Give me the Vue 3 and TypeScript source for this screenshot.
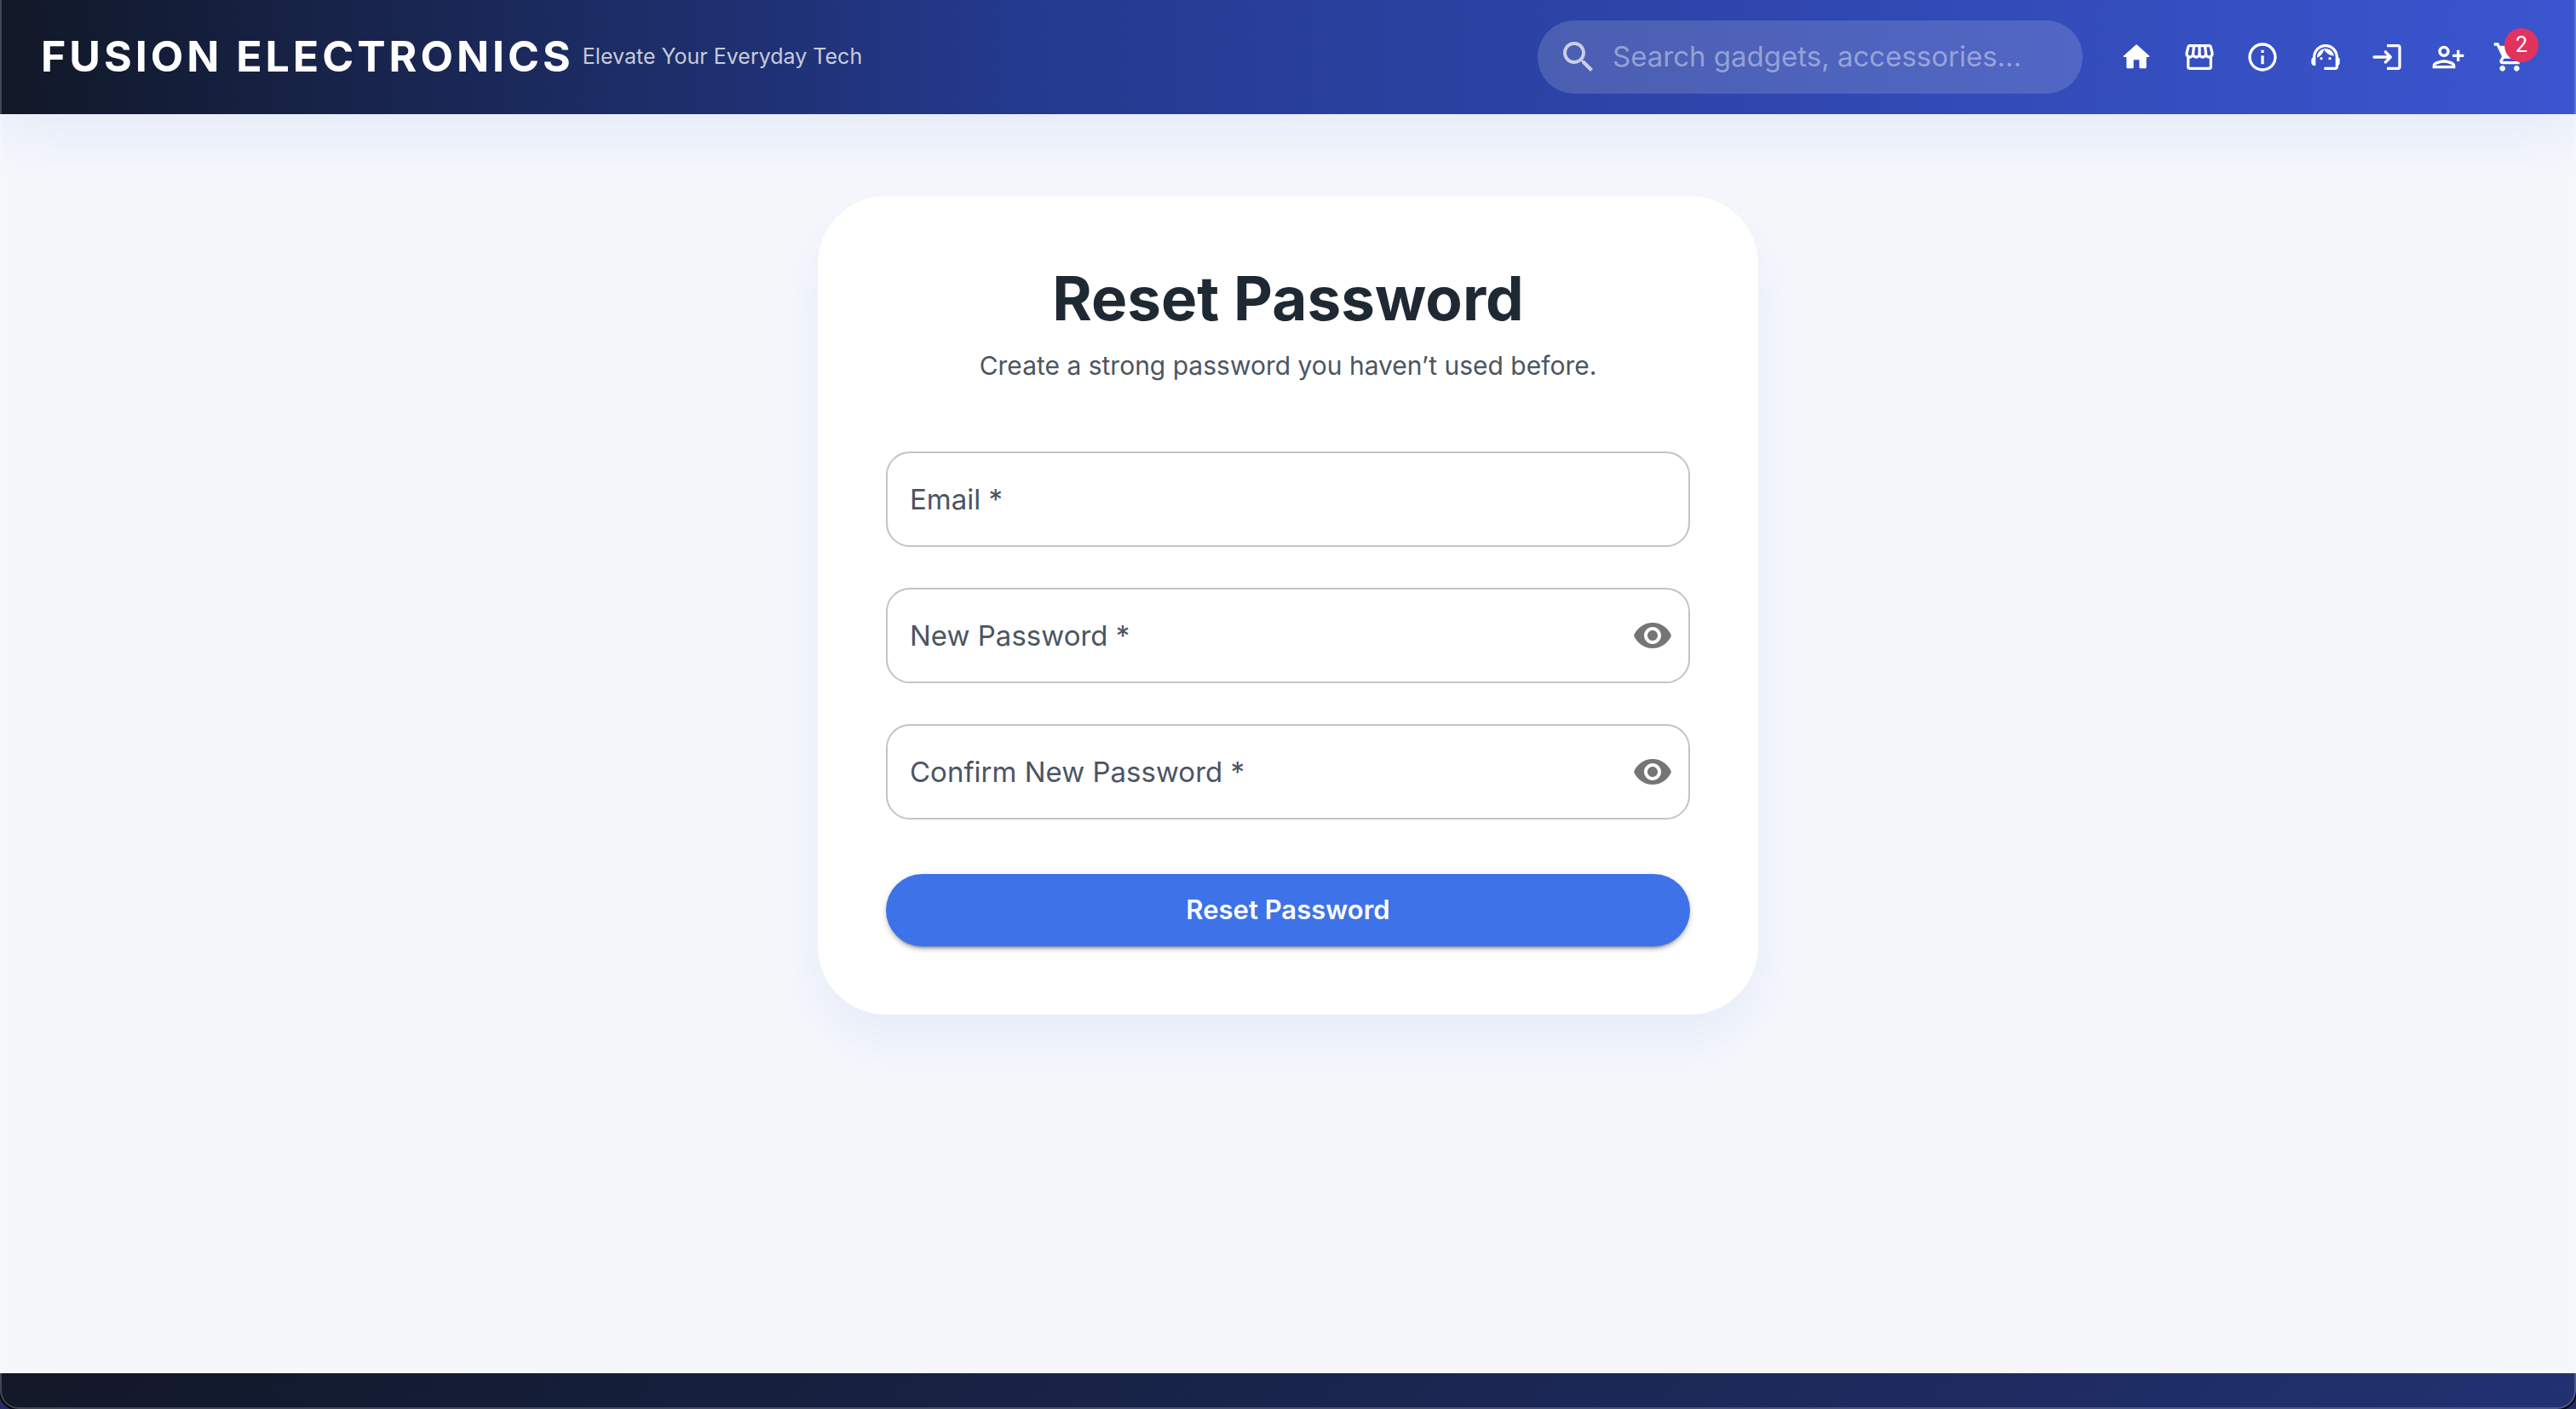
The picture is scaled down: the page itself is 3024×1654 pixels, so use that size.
<script setup lang="ts">
import { reactive, ref } from 'vue'

interface Field {
  id: string
  label: string
  secret: boolean
}

interface NavLink {
  name: string
  wide: boolean
  d: string
}

const fields: Field[] = [
  { id: 'email', label: 'Email', secret: false },
  { id: 'password', label: 'New Password', secret: true },
  { id: 'confirm', label: 'Confirm New Password', secret: true },
]

const values = reactive<Record<string, string>>({ email: '', password: '', confirm: '' })
const shown = reactive<Record<string, boolean>>({ password: false, confirm: false })
const query = ref('')

const links: NavLink[] = [
  { name: 'Home', wide: true, d: 'M10 19v-5h4v5c0 .55.45 1 1 1h3c.55 0 1-.45 1-1v-7h1.7c.46 0 .68-.57.33-.87L12.67 3.6c-.38-.34-.96-.34-1.34 0l-8.36 7.53c-.34.3-.13.87.33.87H5v7c0 .55.45 1 1 1h3c.55 0 1-.45 1-1z' },
  { name: 'Shop', wide: true, d: 'M21.9 8.89l-1.05-4.37c-.22-.9-1-1.52-1.91-1.52H5.05c-.9 0-1.69.63-1.9 1.52L2.1 8.89c-.24 1.02-.02 2.06.62 2.88.08.11.19.19.28.29V19c0 1.1.9 2 2 2h14c1.1 0 2-.9 2-2v-6.94c.09-.09.2-.18.28-.28.64-.82.87-1.87.62-2.89zm-2.99-3.9l1.05 4.37c.1.42.01.84-.25 1.17-.14.18-.44.47-.94.47-.61 0-1.14-.49-1.21-1.14L16.98 5l1.93-.01zM13 5h1.96l.54 4.52c.05.39-.07.78-.33 1.07-.22.26-.54.41-.95.41-.67 0-1.22-.59-1.22-1.31V5zM8.49 9.52L9.04 5H11v4.69c0 .72-.55 1.31-1.29 1.31-.34 0-.65-.15-.89-.41-.25-.29-.37-.68-.33-1.07zm-4.45-.16L5.05 5h1.97l-.58 4.86c-.08.65-.6 1.14-1.21 1.14-.49 0-.8-.29-.93-.47-.27-.32-.36-.75-.26-1.17zM5 19v-6.03c.08.01.15.03.23.03.87 0 1.66-.36 2.24-.95.6.6 1.4.95 2.31.95.87 0 1.65-.36 2.23-.93.59.57 1.39.93 2.29.93.84 0 1.64-.35 2.24-.95.58.59 1.37.95 2.24.95.08 0 .15-.02.23-.03V19H5z' },
  { name: 'About', wide: true, d: 'M11 7h2v2h-2zm0 4h2v6h-2zm1-9C6.48 2 2 6.48 2 12s4.48 10 10 10 10-4.48 10-10S17.52 2 12 2zm0 18c-4.41 0-8-3.59-8-8s3.59-8 8-8 8 3.59 8 8-3.59 8-8 8z' },
  { name: 'Support', wide: false, d: 'M21 12.22C21 6.73 16.74 3 12 3c-4.69 0-9 3.65-9 9.28-.6.34-1 .98-1 1.72v2c0 1.1.9 2 2 2h1v-6.1c0-3.87 3.13-7 7-7s7 3.13 7 7V19h-8v2h8c1.1 0 2-.9 2-2v-1.22c.59-.31 1-.92 1-1.64v-2.3c0-.7-.41-1.31-1-1.62zM9 12a1 1 0 1 0 0 2 1 1 0 0 0 0-2zm6 0a1 1 0 1 0 0 2 1 1 0 0 0 0-2zm3-.97C17.52 8.18 15.04 6 12.05 6c-3.03 0-6.29 2.51-6.03 6.45 2.47-1.01 4.33-3.21 4.86-5.89 1.31 2.63 4 4.44 7.12 4.47z' },
  { name: 'Log in', wide: false, d: 'M10.3 7.7c-.39.39-.39 1.010 0 1.400l1.900 1.900H3c-.55 0-1 .45-1 1s.45 1 1 1h9.200l-1.900 1.900c-.39.39-.39 1.010 0 1.400.39.39 1.010.39 1.400 0l3.590-3.590c.39-.39.39-1.020 0-1.410L11.700 7.700c-.39-.39-1.010-.39-1.400 0zM20 19h-8v2h8c1.100 0 2-.9 2-2V5c0-1.100-.9-2-2-2h-8v2h8v14z' },
  { name: 'Register', wide: false, d: 'M13 8c0-2.210-1.790-4-4-4S5 5.790 5 8s1.790 4 4 4 4-1.790 4-4zm-2 0c0 1.100-.9 2-2 2s-2-.9-2-2 .9-2 2-2 2 .9 2 2zM1 18v2h16v-2c0-2.660-5.330-4-8-4s-8 1.340-8 4zm2 0c.2-.71 3.300-2 6-2 2.690 0 5.780 1.280 6 2H3zm17-3v-3h3v-2h-3V7h-2v3h-3v2h3v3h2z' },
]
</script>

<template>
  <div class="page">
    <header class="bar">
      <a class="brand" href="#">FUSION ELECTRONICS</a>
      <span class="tagline">Elevate Your Everyday Tech</span>
      <form class="search" role="search" @submit.prevent>
        <svg viewBox="0 0 24 24" aria-hidden="true">
          <path d="M15.500 14h-.79l-.28-.27C15.410 12.590 16 11.110 16 9.500 16 5.910 13.090 3 9.500 3S3 5.910 3 9.500 5.910 16 9.500 16c1.610 0 3.090-.59 4.230-1.570l.27.28v.79l5 4.990L20.490 19l-4.990-5zm-6 0C7.010 14 5 11.990 5 9.500S7.010 5 9.500 5 14 7.010 14 9.500 11.990 14 9.500 14z" />
        </svg>
        <input v-model="query" type="text" aria-label="Search" placeholder="Search gadgets, accessories..." />
      </form>
      <nav class="links">
        <a v-for="link in links" :key="link.name" :class="{ wide: link.wide }" href="#" :aria-label="link.name">
          <svg viewBox="0 0 24 24" aria-hidden="true"><path :d="link.d" /></svg>
        </a>
        <a href="#" aria-label="Cart">
          <svg viewBox="0 0 24 24" aria-hidden="true">
            <path d="M7 18c-1.100 0-1.990.9-1.990 2S5.900 22 7 22s2-.9 2-2-.9-2-2-2zM1 2v2h2l3.600 7.590-1.350 2.450c-.16.28-.25.61-.25.96 0 1.100.9 2 2 2h12v-2H7.420c-.14 0-.25-.11-.25-.25l.03-.12.9-1.630h7.450c.75 0 1.410-.41 1.750-1.030l3.580-6.490c.08-.14.12-.31.12-.48 0-.55-.45-1-1-1H5.210l-.94-2H1zm16 16c-1.100 0-1.990.9-1.990 2s.89 2 1.990 2 2-.9 2-2-.9-2-2-2z" />
          </svg>
          <span class="badge">2</span>
        </a>
      </nav>
    </header>

    <main class="content">
      <form class="card" @submit.prevent>
        <h1>Reset Password</h1>
        <p class="hint">Create a strong password you haven’t used before.</p>
        <div v-for="field in fields" :key="field.id" class="field">
          <input
            :id="field.id"
            v-model="values[field.id]"
            :type="field.secret && !shown[field.id] ? 'password' : 'text'"
            placeholder=" "
            required
          />
          <label :for="field.id">{{ field.label }} *</label>
          <button
            v-if="field.secret"
            class="eye"
            type="button"
            aria-label="Toggle password visibility"
            @click="shown[field.id] = !shown[field.id]"
          >
            <svg viewBox="0 0 24 24" aria-hidden="true">
              <path d="M12 4.500C7 4.500 2.730 7.610 1 12c1.730 4.390 6 7.500 11 7.500s9.270-3.110 11-7.500c-1.730-4.390-6-7.500-11-7.500zM12 17c-2.760 0-5-2.240-5-5s2.240-5 5-5 5 2.240 5 5-2.240 5-5 5zm0-8c-1.660 0-3 1.340-3 3s1.340 3 3 3 3-1.340 3-3-1.340-3-3-3z" />
            </svg>
          </button>
        </div>
        <button class="submit" type="submit">Reset Password</button>
      </form>
    </main>

    <footer class="foot"></footer>
  </div>
</template>

<style>
body {
  margin: 0;
  background: #f5f7fb;
}
</style>

<style scoped>
.page {
  display: flex;
  flex-direction: column;
  min-height: 100vh;
  font-family: Inter, 'Open Sans', sans-serif;
  color: #1f2933;
  background: #f5f7fb;
}

.page *,
.page {
  box-sizing: border-box;
}

/* Hairline window frame with rounded lower corners */
.page::after {
  content: '';
  position: fixed;
  inset: 0;
  border: 2px solid rgba(255, 255, 255, 0.2);
  border-top: 0;
  border-radius: 0 0 22px 22px;
  box-shadow: 0 0 0 2px #05070d, 0 0 0 20px #222c60;
  pointer-events: none;
}

svg {
  display: block;
  width: 40px;
  height: 40px;
  fill: currentColor;
}

.bar {
  display: flex;
  align-items: center;
  height: 134px;
  padding: 0 48px;
  color: #fff;
  background: linear-gradient(90deg, #111827 0%, #243a8f 40%, #3b55d0 100%);
  box-shadow: 0 30px 60px rgba(61, 114, 232, 0.08);
}

.brand {
  padding-bottom: 2px;
  color: #fff;
  font-size: 50px;
  font-weight: 700;
  letter-spacing: 4px;
  line-height: 64px;
  text-decoration: none;
  white-space: nowrap;
}

.tagline {
  margin-left: 10px;
  padding-bottom: 2px;
  font-size: 25px;
  color: rgba(255, 255, 255, 0.75);
  white-space: nowrap;
}

.search {
  display: flex;
  align-items: center;
  width: 640px;
  height: 86px;
  margin-left: auto;
  padding: 0 24px;
  border-radius: 43px;
  background: rgba(255, 255, 255, 0.15);
}

.search svg {
  flex: none;
  width: 48px;
  height: 48px;
  color: rgba(255, 255, 255, 0.7);
}

.search input {
  flex: 1;
  min-width: 0;
  margin-left: 16px;
  padding: 0 0 2px;
  border: 0;
  outline: 0;
  background: none;
  color: #fff;
  font: inherit;
  font-size: 33px;
}

.search input::placeholder {
  color: rgba(255, 255, 255, 0.42);
  opacity: 1;
}

.links {
  display: flex;
  align-items: center;
  gap: 32px;
  margin: 0 10px 0 43px;
}

.links a {
  position: relative;
  color: #fff;
}

.links .wide {
  margin-right: 2px;
}

.badge {
  position: absolute;
  top: -14px;
  right: -14px;
  width: 40px;
  height: 40px;
  border-radius: 50%;
  background: #e2335f;
  color: #fff;
  font-family: Roboto, sans-serif;
  font-size: 25px;
  font-weight: 400;
  line-height: 40px;
  text-align: center;
}

.content {
  flex: 1;
  display: flex;
  justify-content: center;
  align-items: flex-start;
  padding: 96px 48px;
}

.card {
  display: flex;
  flex-direction: column;
  width: 100%;
  max-width: 1104px;
  padding: 80px;
  border-radius: 80px;
  background: #fff;
  box-shadow: 0 30px 60px rgba(61, 114, 232, 0.08);
}

h1 {
  margin: 0;
  font-size: 71px;
  font-weight: 700;
  line-height: 80px;
  text-align: center;
}

.hint {
  margin: 16px 0 78px;
  color: #4b5563;
  font-size: 30px;
  line-height: 46px;
  text-align: center;
}

.field {
  position: relative;
  display: flex;
  align-items: center;
  height: 112px;
  margin-bottom: 48px;
  border: 2px solid #c4c4c4;
  border-radius: 28px;
}

.field input {
  flex: 1;
  min-width: 0;
  height: 100%;
  padding: 0 26px;
  border: 0;
  outline: 0;
  background: none;
  color: inherit;
  font: inherit;
  font-size: 33px;
}

.field label {
  position: absolute;
  left: 26px;
  color: #4b5563;
  font-size: 33px;
  line-height: 48px;
  pointer-events: none;
}

.field input:not(:placeholder-shown) + label {
  visibility: hidden;
}

.eye {
  margin-right: 18px;
  padding: 0;
  border: 0;
  background: none;
  color: #757575;
}

.eye svg {
  width: 48px;
  height: 48px;
}

.submit {
  height: 85px;
  margin-top: 16px;
  padding: 0 0 2px;
  border: 0;
  border-radius: 43px;
  background: #3d72e8;
  color: #fff;
  font: inherit;
  font-size: 31px;
  font-weight: 600;
  box-shadow: 0 6px 2px -4px rgba(0, 0, 0, 0.2), 0 4px 4px rgba(0, 0, 0, 0.14), 0 2px 10px rgba(0, 0, 0, 0.12);
}

.foot {
  height: 42px;
  background: linear-gradient(135deg, #111827, #223172);
}
</style>
